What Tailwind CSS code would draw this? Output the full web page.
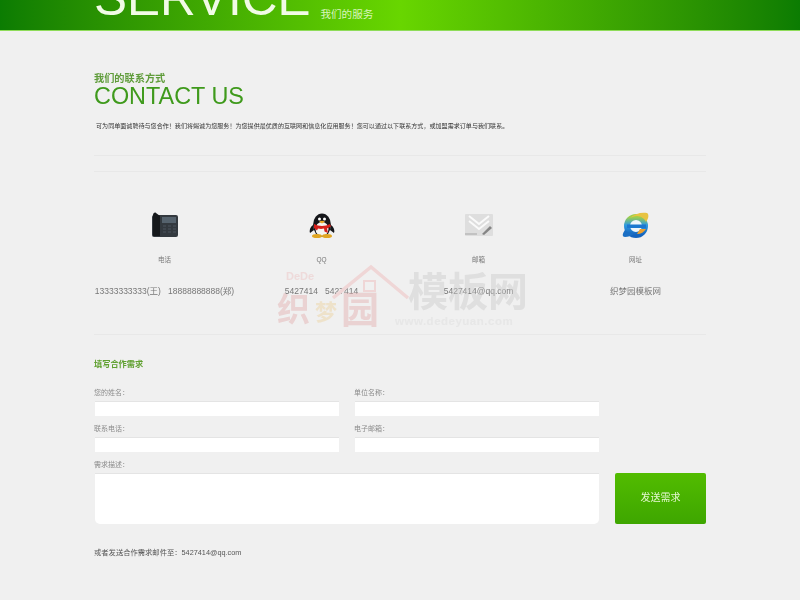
<!DOCTYPE html>
<html lang="zh-CN">
<head>
  <meta charset="UTF-8" />
  <meta name="viewport" content="width=device-width, initial-scale=1.0"/>
  <title>联系我们</title>
  <script src="https://cdn.jsdelivr.net/npm/@tailwindcss/browser@4"></script>
</head>
<body class="bg-[#f0f0f0] font-['Liberation_Sans','Noto_Sans_CJK_SC',sans-serif]">
  <div class="relative w-[800px] h-[600px] overflow-hidden blur-[0.5px]">

    <!-- banner -->
    <header class="h-[31px] bg-linear-to-r from-[#0b7c02] via-[#68d600] to-[#0b7c02] border-b border-[#8fdc5a] overflow-hidden pl-[94px] flex items-end">
      <span class="text-[49.5px] leading-[49px] text-[#f1fbe6] mb-[8px]">SERVICE</span>
      <span class="text-[10.6px] leading-[12px] text-[#d9f5bd] ml-[10px] mb-[10px]">我们的服务</span>
    </header>

    <main class="w-[612px] ml-[94px]">
      <!-- heading -->
      <p class="mt-[42px] text-[10.2px] leading-[12px] font-bold text-[#5f9c3a]">我们的联系方式</p>
      <h1 class="text-[23.4px] leading-[24px] text-[#3f9a1c] -mt-[1px]">CONTACT US</h1>
      <p class="mt-[13px] ml-[2px] text-[6.07px] leading-[10px] text-[#333]">可为同单面诚聘待与您合作！我们将竭诚为您服务！为您提供最优质的互联网和信息化应用服务！您可以通过以下联系方式，或加盟需求订单与我们联系。</p>

      <div class="mt-[24px] border-t border-[#e8e8e8]"></div>
      <div class="mt-[15px] border-t border-[#e8e8e8]"></div>

      <!-- contact columns -->
      <section class="grid grid-cols-4 -mx-[8px] w-[628px] mt-[40px] text-center">
        <div class="flex flex-col items-center">
          <svg class="blur-[0.5px]" width="28" height="26" viewBox="0 0 28 26">
            <rect x="1" y="3" width="26" height="22" rx="2" fill="#33393f"/>
            <path d="M2 24V3c0-2 2-3 3-2l4 3v20z" fill="#15181b"/>
            <rect x="11" y="5" width="14" height="6" fill="#55626d"/>
            <path d="M12 14h3M17 14h3M22 14h3M12 17h3M17 17h3M22 17h3M12 20h3M17 20h3M22 20h3" stroke="#4c555e" stroke-width="1.2"/>
          </svg>
          <span class="mt-[16px] text-[6.5px] leading-[12px] text-[#777]">电话</span>
          <span class="mt-[19px] text-[8.5px] leading-[12px] text-[#777] whitespace-nowrap">13333333333(王)&nbsp;&nbsp; 18888888888(郑)</span>
        </div>
        <div class="flex flex-col items-center">
          <svg class="blur-[0.5px]" width="28" height="26" viewBox="0 0 28 26">
            <ellipse cx="14" cy="13" rx="9" ry="11.500" fill="#15161a"/>
            <ellipse cx="14" cy="17" rx="6.500" ry="7" fill="#f4f4f0"/>
            <path d="M5 13c-3 2-4 6-3 8l4-3zM23 13c3 2 4 6 3 8l-4-3z" fill="#15161a"/>
            <ellipse cx="9" cy="24" rx="5" ry="2" fill="#e0a521"/>
            <ellipse cx="19" cy="24" rx="5" ry="2" fill="#e0a521"/>
            <path d="M6 12c5 2.500 11 2.500 16 0l1 2.500-4 2 1 4.500-3.500-1.500-.5-3c-2 .5-4 .5-6 0l-1 2-3-2.500z" fill="#d5201c"/>
            <circle cx="11.500" cy="7" r="1.500" fill="#fff"/>
            <circle cx="16.500" cy="7" r="1.500" fill="#fff"/>
            <path d="M11 9.500c2-1 4-1 6 0l-3 2z" fill="#eda821"/>
          </svg>
          <span class="mt-[16px] text-[6.5px] leading-[12px] text-[#777]">QQ</span>
          <span class="mt-[19px] text-[8.5px] leading-[12px] text-[#777] whitespace-nowrap">5427414&nbsp;&nbsp; 5427414</span>
        </div>
        <div class="flex flex-col items-center">
          <svg class="blur-[0.6px]" width="32" height="26" viewBox="0 0 32 26">
            <rect x="2" y="2" width="28" height="22" rx="1" fill="#dedede"/>
            <path d="M6 4l10 8 10-8" fill="none" stroke="#fafafa" stroke-width="2"/>
            <path d="M6 9l10 8 10-8" fill="none" stroke="#fafafa" stroke-width="2"/>
            <path d="M2 22h12" stroke="#b8b8b8" stroke-width="1.500"/>
            <path d="M19 22l8-8 2 2-8 7z" fill="#858585"/>
          </svg>
          <span class="mt-[16px] text-[6.5px] leading-[12px] text-[#777]">邮箱</span>
          <span class="mt-[19px] text-[8.5px] leading-[12px] text-[#777] whitespace-nowrap">5427414@qq.com</span>
        </div>
        <div class="flex flex-col items-center">
          <svg class="blur-[0.4px]" width="28" height="26" viewBox="0 0 28 26">
            <defs>
              <linearGradient id="ieRing" x1="0" y1="0" x2="0" y2="1">
                <stop offset="0" stop-color="#9fd04a"/>
                <stop offset="0.45" stop-color="#2f9be0"/>
                <stop offset="1" stop-color="#1563bd"/>
              </linearGradient>
            </defs>
            <circle cx="14" cy="14" r="9" fill="#eef6fb" stroke="url(#ieRing)" stroke-width="6"/>
            <rect x="5" y="12.500" width="19" height="3.500" fill="#1c78d0"/>
            <path d="M8 6c4-4 11-6 17-5 2 1 2 5-1 9-1-3-5-6-9-6-3 0-5 1-7 2z" fill="#e7c342"/>
            <path d="M3 18c-3 4-3 7 0 7 3 0 6-1 9-3-3-.5-7-2-9-4z" fill="#1b6fc4"/>
            <path d="M15 22c4 0 7-2 9-5h-6c-1 2-2 3-3 5z" fill="#f0a02c"/>
          </svg>
          <span class="mt-[16px] text-[6.5px] leading-[12px] text-[#777]">网址</span>
          <span class="mt-[19px] text-[8.5px] leading-[12px] text-[#777] whitespace-nowrap">织梦园模板网</span>
        </div>
      </section>

      <div class="mt-[37px] border-t border-[#e8e8e8]"></div>

      <!-- form -->
      <form class="mt-[24px]">
        <p class="text-[8.2px] leading-[12px] font-bold text-[#5fa02f]">填写合作需求</p>
        <div class="grid grid-cols-[244px_244px] gap-x-[16px] mt-[16px] pl-[1px]">
          <label class="block">
            <span class="block -ml-[1px] h-[12px] text-[7px] leading-[12px] text-[#8c8c8c]">您的姓名：</span>
            <span class="block h-[15px] mt-[2px] bg-white border-t border-[#e4e4e4]"></span>
          </label>
          <label class="block">
            <span class="block -ml-[1px] h-[12px] text-[7px] leading-[12px] text-[#8c8c8c]">单位名称：</span>
            <span class="block h-[15px] mt-[2px] bg-white border-t border-[#e4e4e4]"></span>
          </label>
          <label class="block mt-[7px]">
            <span class="block -ml-[1px] h-[12px] text-[7px] leading-[12px] text-[#8c8c8c]">联系电话：</span>
            <span class="block h-[15px] mt-[2px] bg-white border-t border-[#e4e4e4]"></span>
          </label>
          <label class="block mt-[7px]">
            <span class="block -ml-[1px] h-[12px] text-[7px] leading-[12px] text-[#8c8c8c]">电子邮箱：</span>
            <span class="block h-[15px] mt-[2px] bg-white border-t border-[#e4e4e4]"></span>
          </label>
        </div>
        <p class="mt-[7px] h-[12px] text-[7px] leading-[12px] text-[#8c8c8c]">需求描述：</p>
        <div class="flex mt-[2px] pl-[1px]">
          <div class="w-[504px] h-[51px] bg-white border-t border-[#e4e4e4] rounded-b-[5px]"></div>
          <button type="button" class="ml-[16px] w-[91px] h-[51px] pb-[3px] bg-linear-to-b from-[#52bc00] to-[#3ea600] rounded-[2px] text-[10px] text-[#e4f7cf]">发送需求</button>
        </div>
      </form>

      <p class="mt-[23px] text-[7.3px] leading-[12px] text-[#555]">或者发送合作需求邮件至：5427414@qq.com</p>
    </main>

    <!-- site watermark -->
    <div class="absolute left-[277px] top-[264px] w-[252px] h-[66px] pointer-events-none">
      <svg class="absolute left-[55px] top-0" width="78" height="36" viewBox="0 0 78 36">
        <path d="M1 34L39 3l37 31" fill="none" stroke="#efd6d6" stroke-width="3.500"/>
        <rect x="32" y="17" width="11" height="10" fill="none" stroke="#efd6d6" stroke-width="2"/>
      </svg>
      <span class="absolute left-0 top-[28px] text-[33px] leading-[36px] font-bold text-[#e3b4b4]/50">织</span>
      <span class="absolute left-[38px] top-[36px] text-[22px] leading-[26px] font-bold text-[#ecd9b0]/60">梦</span>
      <span class="absolute left-[64px] top-[26px] text-[38px] leading-[40px] font-bold text-[#e3b4b4]/50">园</span>
      <span class="absolute left-[9px] top-[5px] text-[11px] leading-[14px] font-bold text-[#edcccc]/60">DeDe</span>
      <span class="absolute left-[131px] top-[6px] text-[40px] leading-[44px] font-bold text-[#c9c9c9]/45 whitespace-nowrap">模板网</span>
      <span class="absolute left-[118px] top-[50px] text-[11.5px] leading-[14px] font-bold tracking-[0.5px] text-[#e2e2e2]/70 whitespace-nowrap">www.dedeyuan.com</span>
    </div>
  </div>
</body>
</html>
